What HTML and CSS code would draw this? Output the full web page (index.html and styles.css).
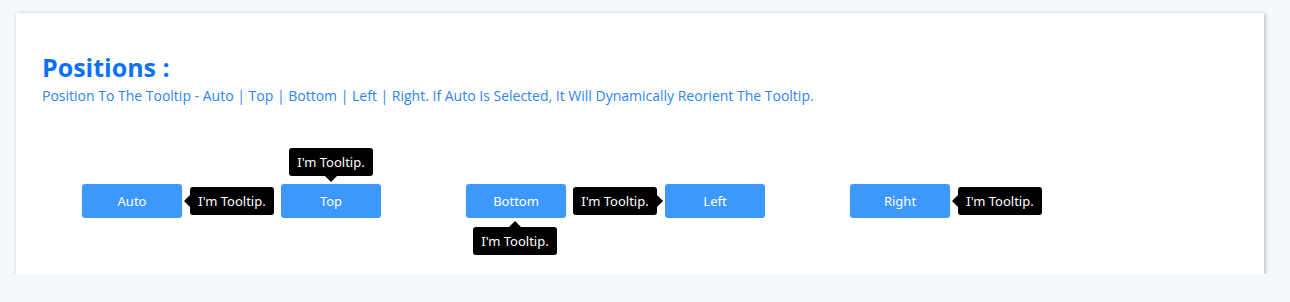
FILE: index.html
```html
<!doctype html>
<html>
<head>
    <meta charset="utf-8">
    <title>Tooltip Positions</title>
    <meta name="viewport" content="width=device-width, initial-scale=1">
    <link rel="stylesheet" href="styles.css">
</head>
<body class="page">
<div class="card">
    <h2 class="card-title">Positions :</h2>
    <p class="card-text">Position To The Tooltip - Auto | Top | Bottom | Left | Right. If Auto Is Selected, It Will Dynamically Reorient The Tooltip.</p>

    <div class="demo-row">
        <div class="demo-pair">
            <div class="tip-wrap">
                <button class="tip-button" type="button">Auto</button>
                <span class="tip tip-right">I'm Tooltip.</span>
            </div>
            <div class="tip-wrap">
                <button class="tip-button" type="button">Top</button>
                <span class="tip tip-top">I'm Tooltip.</span>
            </div>
        </div>
        <div class="demo-pair">
            <div class="tip-wrap">
                <button class="tip-button" type="button">Bottom</button>
                <span class="tip tip-bottom">I'm Tooltip.</span>
            </div>
            <div class="tip-wrap">
                <button class="tip-button" type="button">Left</button>
                <span class="tip tip-left">I'm Tooltip.</span>
            </div>
        </div>
        <div class="demo-pair">
            <div class="tip-wrap">
                <button class="tip-button" type="button">Right</button>
                <span class="tip tip-right">I'm Tooltip.</span>
            </div>
        </div>
    </div>
</div>
</body>
</html>
```

FILE: styles.css
```css
.page {
    margin: 0;
    padding: 13px 26px 0 16px;
    background: #f5f9fd;
}

/* white box */
.card {
    height: 261px;
    box-sizing: border-box;
    padding: 39px 26px 0;
    background: #ffffff;
    box-shadow: 1px 1px 4px 0 rgba(0, 0, 0, 0.3);
}

.card-title {
    margin: 0;
    font-family: 'Open Sans', sans-serif;
    font-weight: 700;
    font-size: 25px;
    line-height: 30px;
    color: #0b72f5;
}

.card-text {
    margin: 5px 0 0;
    font-family: 'Open Sans', sans-serif;
    font-size: 14px;
    line-height: 18px;
    color: #2d85f5;
}

/* buttons row */
.demo-row {
    display: flex;
    gap: 85px;
    margin-top: 79px;
    padding-left: 40px;
}

.demo-pair {
    display: flex;
    gap: 99px;
}

.tip-wrap {
    position: relative;
}

.tip-button {
    display: block;
    width: 100px;
    height: 34px;
    padding: 0;
    border: 0;
    border-radius: 3px;
    background: #3d98fd;
    color: #ffffff;
    font-family: 'Noto Sans', sans-serif;
    font-size: 13px;
    cursor: pointer;
}

/* tooltip */
.tip {
    position: absolute;
    width: 84px;
    height: 28px;
    box-sizing: border-box;
    border-radius: 3px;
    background: #000000;
    color: #ffffff;
    font-family: 'Noto Sans', sans-serif;
    font-size: 13px;
    line-height: 28px;
    text-align: center;
    white-space: nowrap;
}

.tip::before {
    content: "";
    position: absolute;
    border: 6px solid transparent;
}

.tip-right {
    left: calc(100% + 8px);
    top: 3px;
}

.tip-right::before {
    right: 100%;
    top: 8px;
    border-left-width: 0;
    border-right-color: #000000;
}

.tip-left {
    right: calc(100% + 8px);
    top: 3px;
}

.tip-left::before {
    left: 100%;
    top: 8px;
    border-right-width: 0;
    border-left-color: #000000;
}

.tip-top {
    bottom: calc(100% + 8px);
    left: 8px;
}

.tip-top::before {
    top: 100%;
    left: 36px;
    border-bottom-width: 0;
    border-top-color: #000000;
}

.tip-bottom {
    top: calc(100% + 9px);
    left: 7px;
}

.tip-bottom::before {
    bottom: 100%;
    left: 36px;
    border-top-width: 0;
    border-bottom-color: #000000;
}
```
